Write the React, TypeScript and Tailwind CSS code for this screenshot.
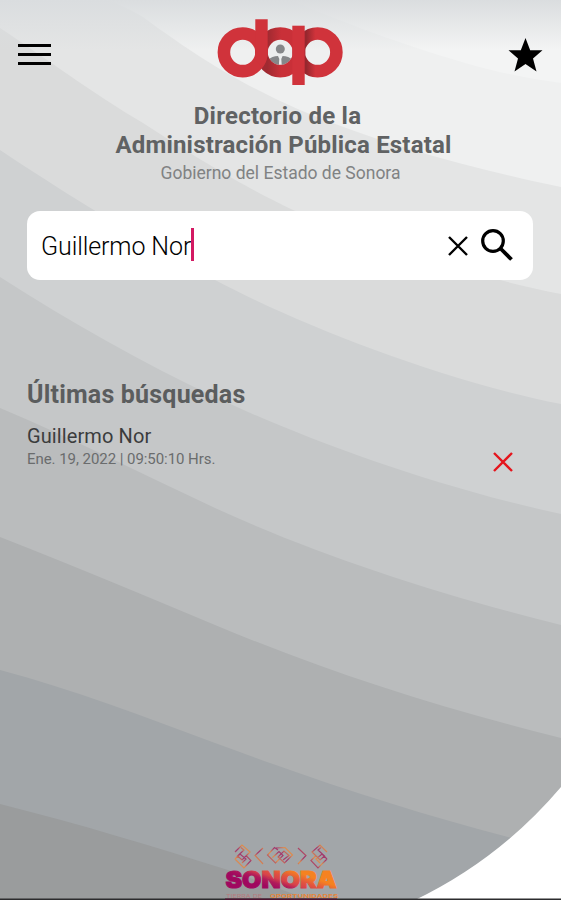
const bands = [
  { d: "M0 -40C45 -12 95 -12 143 17C205 63 250 88 300 110C385 146 480 170 561 187V900H0Z", fill: "#e4e5e5" },
  { d: "M0 28C40 54 95 95 143 123C215 170 250 189 293 210C370 243 470 276 561 294V900H0Z", fill: "#dadbdb" },
  { d: "M0 150C75 200 145 242 215 280C300 325 440 380 561 404V900H0Z", fill: "#cfd1d2" },
  { d: "M0 277C72 323 143 363 215 397C300 437 430 486 561 514V900H0Z", fill: "#c5c7c8" },
  { d: "M0 408C70 437 140 473 215 508C315 554 440 595 561 625V900H0Z", fill: "#babcbd" },
  { d: "M0 537C75 566 145 596 215 625C330 673 440 708 561 738V900H0Z", fill: "#aeb0b1" },
  { d: "M0 670C75 690 145 717 215 743C320 782 415 813 508 837L561 850V900H0Z", fill: "#a2a6a9" },
  { d: "M0 804C80 824 155 847 228 870L310 900H0Z", fill: "#9a9c9d" },
];

function Backdrop() {
  return (
    <svg className="absolute inset-0 h-full w-full" viewBox="0 0 561 900" aria-hidden="true">
      <defs>
        <linearGradient id="shade" x1="0" y1="0" x2="0" y2="1">
          <stop offset="0" stopColor="#dadddf" />
          <stop offset="1" stopColor="#dadddf" stopOpacity="0" />
        </linearGradient>
      </defs>
      <rect width="561" height="900" fill="#eff0f0" />
      <path d="M290 0C330 17 390 41 465 63C500 73 530 79 561 83V0Z" fill="#f3f4f4" />
      {bands.map((b) => (
        <path key={b.d} d={b.d} fill={b.fill} />
      ))}
      <rect width="561" height="50" fill="url(#shade)" />
      <path d="M561 787Q500 859 415 900H561Z" fill="#fff" />
      <rect y="898.5" width="561" height="1.5" fill="#2c2c2e" />
    </svg>
  );
}

function DapLogo() {
  return (
    <svg className="h-[68px] w-[128px]" viewBox="216 18 128 68" aria-label="dap">
      <defs>
        <linearGradient id="ringA" x1="0" x2="1">
          <stop offset="0.16" stopColor="#a02a31" />
          <stop offset="0.52" stopColor="#c93038" />
        </linearGradient>
        <linearGradient id="ringP" x1="0" x2="1">
          <stop offset="0.2" stopColor="#96272e" />
          <stop offset="0.44" stopColor="#d0333b" />
        </linearGradient>
        <clipPath id="hole">
          <circle cx="280.3" cy="52.3" r="12.6" />
        </clipPath>
      </defs>
      <circle cx="280.3" cy="52.3" r="12.6" fill="#eceeee" />
      <g clipPath="url(#hole)" fill="#858789">
        <circle cx="280.3" cy="49" r="4.5" />
        <path d="M268 66V60Q272 56 278 56L279.3 59L278.8 66ZM292.6 66V60Q288.6 56 282.6 56L281.3 59L281.8 66Z" />
      </g>
      <circle cx="280.3" cy="52.3" r="18.8" fill="none" stroke="url(#ringA)" strokeWidth="12.6" />
      <circle cx="317.6" cy="52.3" r="18.8" fill="none" stroke="url(#ringP)" strokeWidth="12.6" />
      <path d="M292.3 25.7H304.7V85H292.3Z" fill="#d0333b" />
      <circle cx="242.7" cy="52.3" r="18.8" fill="none" stroke="#d0333b" strokeWidth="12.6" />
      <path d="M255.3 19.3H267.7V52.3Q267.7 61 262 67L255.3 60Z" fill="#d0333b" />
    </svg>
  );
}

function Cross({ className }: { className: string }) {
  return (
    <svg className={className} viewBox="0 0 20 20" fill="none" stroke="currentColor" strokeWidth="2.4">
      <path d="M1 1L19 19M19 1L1 19" />
    </svg>
  );
}

function SonoraLogo() {
  return (
    <svg className="h-[57px] w-[116px]" viewBox="222 843 116 57">
      <defs>
        <linearGradient id="sonora" gradientUnits="userSpaceOnUse" x1="274" y1="889" x2="282" y2="866">
          <stop offset="0" stopColor="#a0085f" />
          <stop offset="0.24" stopColor="#b01a5a" />
          <stop offset="0.44" stopColor="#d8434a" />
          <stop offset="0.65" stopColor="#e2553e" />
          <stop offset="0.95" stopColor="#f58220" />
        </linearGradient>
        <linearGradient id="motif" gradientUnits="userSpaceOnUse" x1="234" y1="868" x2="239" y2="863" spreadMethod="reflect">
          <stop offset="0.2" stopColor="#a33a6c" />
          <stop offset="0.9" stopColor="#dc8b4e" />
        </linearGradient>
      </defs>
      <g fill="none" stroke="url(#motif)" strokeWidth="1.2">
        <path d="M234 852L241 845L249 852L241 860L236.5 856L243 850L240 847.5M234 859L239 854L245 859L241 863M234 859L243 868L250 860.5L245 855.5" />
        <path d="M262 848L254 855.5L262 864" />
        <path d="M277 850L273.5 847.5L266.5 855L274.5 863L282 855.5L278 851.5L271.5 857.5M275 848L284 847.5L291.5 855L283.5 863L277 857L283 851L288 855.5L282 860" />
        <path d="M297 848L305 855.5L297 864" />
        <path d="M326 852L319 845L311 852L319 860L323.5 856L317 850L320 847.5M326 859L321 854L315 859L319 863M326 859L317 868L310 860.5L315 855.5" />
      </g>
      <text x="224.5" y="888" textLength="111" lengthAdjust="spacingAndGlyphs" fill="url(#sonora)" stroke="url(#sonora)" strokeWidth="1" className="font-[Inter,sans-serif] text-[23px] font-black">
        SONORA
      </text>
      <text x="225" y="898" textLength="36" lengthAdjust="spacingAndGlyphs" fill="#b77a7c" className="font-[Inter,sans-serif] text-[5px]">
        TIERRA DE
      </text>
      <text x="269" y="898" textLength="68" lengthAdjust="spacingAndGlyphs" fill="#e5853a" className="font-[Inter,sans-serif] text-[5px] font-bold">
        OPORTUNIDADES
      </text>
      <path d="M224 899.3H336" stroke="#4d1431" strokeWidth="1.4" />
    </svg>
  );
}

export default function App() {
  return (
    <div className="relative h-[900px] w-[561px] overflow-hidden font-[Roboto,sans-serif]">
      <Backdrop />
      <div className="relative flex h-full flex-col">
        <header className="flex h-[86px] items-start justify-between pt-[18px] pr-[18px] pl-[18px]">
          <button className="mt-[26px] flex w-[33px] flex-col gap-[6px]" aria-label="Menú">
            <span className="h-[3px] w-full bg-black" />
            <span className="h-[3px] w-full bg-black" />
            <span className="h-[3px] w-full bg-black" />
          </button>
          <DapLogo />
          <button className="mt-[20px]" aria-label="Favoritos">
            <svg className="h-[35px] w-[35px]" viewBox="0 0 35 35">
              <path d="M17.5 0L22.2 12.3H34.5L25 20.5L28.5 33.5L17.5 26L6.5 33.5L10 20.5L0.5 12.3H12.8Z" />
            </svg>
          </button>
        </header>

        <div className="flex flex-col items-center pt-[16px] text-[#606263]">
          <h1 className="flex flex-col items-center text-[24px] leading-[29px] font-bold">
            <span className="pr-[6px] tracking-[0.25px]">Directorio de la</span>
            <span className="pl-[6px] tracking-[0.18px]">Administración Pública Estatal</span>
          </h1>
          <p className="mt-px text-[17.5px] leading-[24px] text-[#808283]">Gobierno del Estado de Sonora</p>
        </div>

        <div className="mt-[26px] mr-[28px] ml-[27px] flex h-[69px] items-center rounded-[13px] bg-white pr-[20px] pl-[14px]">
          <span className="mt-[2px] text-[25px] font-light tracking-[-0.1px] text-black">Guillermo Nor</span>
          <span className="mb-[2px] h-[33px] w-[3px] bg-[#d31962]" />
          <Cross className="ml-auto h-[20px] w-[20px] text-black" />
          <svg className="mb-[2px] ml-[13px] h-[32px] w-[32px]" viewBox="0 0 32 32" fill="none" stroke="#000" strokeWidth="3.2">
            <circle cx="12" cy="12" r="10.3" />
            <path d="M19.5 19.5L30.5 30.5" strokeWidth="3.8" />
          </svg>
        </div>

        <section className="mt-[98px] pr-[48px] pl-[27px]">
          <h2 className="text-[25px] leading-[34px] font-bold tracking-[0.2px] text-[#5b5d5e]">Últimas búsquedas</h2>
          <div className="mt-[12px] flex justify-between">
            <div>
              <p className="text-[20px] leading-[24px] tracking-[0.1px] text-[#3b3c3d]">Guillermo Nor</p>
              <p className="text-[15px] leading-[23px] tracking-[-0.05px] text-[#6a6c6d]">Ene. 19, 2022 | 09:50:10 Hrs.</p>
            </div>
            <Cross className="mt-[28px] h-[20px] w-[20px] text-[#e5151d]" />
          </div>
        </section>

        <footer className="mt-auto flex justify-center">
          <SonoraLogo />
        </footer>
      </div>
    </div>
  );
}
